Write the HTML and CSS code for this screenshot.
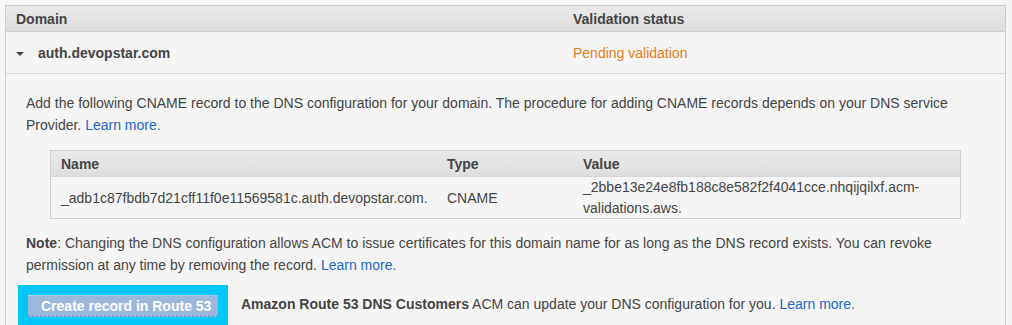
FILE: index.html
```html
<!DOCTYPE html>
<html>
<head>
<meta charset="utf-8">
<link rel="stylesheet" href="styles.css">
</head>
<body>
<div class="table">
  <div class="head row-grid">
    <div class="cell">Domain</div>
    <div class="cell">Validation status</div>
  </div>
  <div class="row row-grid">
    <div class="cell domain"><span class="caret"></span>auth.devopstar.com</div>
    <div class="cell pending">Pending validation</div>
  </div>
  <div class="details">
    <p class="para">Add the following CNAME record to the DNS configuration for your domain. The procedure for adding CNAME records depends on your DNS service Provider. <a href="#">Learn more.</a></p>
    <div class="inner">
      <div class="ihead igrid">
        <div class="icell">Name</div>
        <div class="icell">Type</div>
        <div class="icell">Value</div>
      </div>
      <div class="irow igrid">
        <div class="icell">_adb1c87fbdb7d21cff11f0e11569581c.auth.devopstar.com.</div>
        <div class="icell">CNAME</div>
        <div class="icell">_2bbe13e24e8fb188c8e582f2f4041cce.nhqijqilxf.acm-validations.aws.</div>
      </div>
    </div>
    <p class="para note"><b>Note</b>: Changing the DNS configuration allows ACM to issue certificates for this domain name for as long as the DNS record exists. You can revoke permission at any time by removing the record. <a href="#">Learn more.</a></p>
    <div class="action">
      <div class="focus"><button class="btn">Create record in Route 53</button></div>
      <div class="action-text"><b>Amazon Route 53 DNS Customers</b> ACM can update your DNS configuration for you. <a href="#">Learn more.</a></div>
    </div>
  </div>
</div>
</body>
</html>
```
FILE: styles.css
```css
html, body {
  margin: 0;
  background: #f5f5f5;
}
body {
  padding: 5px 6px 0 5px;
  font-family: "Liberation Sans", Arial, sans-serif;
  font-size: 14px;
  color: #444;
}
a {
  color: #1e66c5;
  text-decoration: none;
}
.table {
  width: 999px;
  border: 1px solid #ccc;
  border-bottom: none;
}
.row-grid {
  display: grid;
  grid-template-columns: 557px 1fr;
}
.head {
  height: 25px;
  background: linear-gradient(#e9e9e9, #dedede);
  border-bottom: 1px solid #cfcfcf;
  font-weight: bold;
  align-items: center;
}
.cell {
  padding-left: 10px;
  display: flex;
  align-items: center;
}
.row {
  height: 41px;
  border-bottom: 1px solid #d6d6d6;
}
.domain {
  font-weight: bold;
}
.caret {
  width: 0;
  height: 0;
  border-left: 4px solid transparent;
  border-right: 4px solid transparent;
  border-top: 4px solid #444;
  margin-right: 14px;
  margin-top: 2px;
}
.pending {
  color: #e27e1c;
}
.details {
  padding: 18px 0 0 20px;
}
.para {
  margin: 0;
  line-height: 22px;
  padding-right: 20px;
}
.inner {
  margin: 14px 0 0 24px;
  width: 909px;
  border: 1px solid #d0d0d0;
}
.igrid {
  display: grid;
  grid-template-columns: 386px 136px 1fr;
}
.ihead {
  height: 25px;
  background: linear-gradient(#e9e9e9, #dedede);
  border-bottom: 1px solid #d6d6d6;
  font-weight: bold;
  align-items: center;
}
.icell {
  padding-left: 10px;
  padding-right: 10px;
}
.irow {
  height: 41px;
  align-items: center;
  line-height: 21px;
}
.note {
  margin-top: 13px;
}
.action {
  display: flex;
  align-items: center;
  margin: 9px 0 0 -8px;
}
.focus {
  background: #00c7f7;
  padding: 10px;
}
.btn {
  display: block;
  width: 190px;
  height: 22px;
  padding: 0 0 0 13px;
  text-align: left;
  background: #9cb7dc;
  border: none;
  border-top: 1px dotted #c8d6ea;
  border-bottom: 2px dotted #7f9cc8;
  color: #fff;
  font-family: "Liberation Sans", Arial, sans-serif;
  font-size: 14px;
  font-weight: bold;
}
.action-text {
  margin-left: 13px;
  margin-top: -4px;
}
```
